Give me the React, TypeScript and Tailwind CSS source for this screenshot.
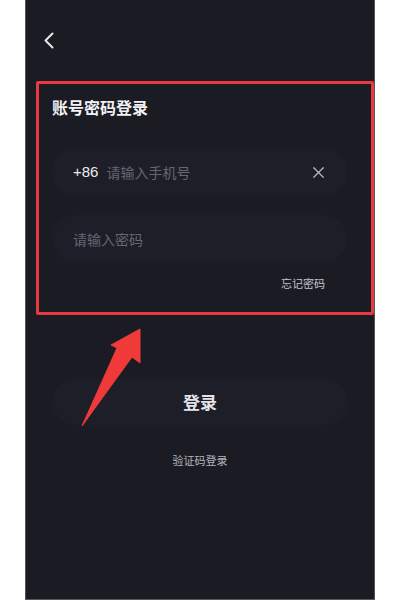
import { X } from 'lucide-react';

export default function App() {
  return (
    <div className="min-h-[600px] w-full bg-white" style={{ fontFamily: '"Noto Sans CJK SC", "Noto Sans", sans-serif' }}>
      <div className="relative mx-auto flex h-[600px] w-[350px] flex-col border-x border-b border-[#55555c] bg-[#1b1b23]">
        {/* back */}
        <div className="pl-[17px] pt-[32px]">
          <svg width="12" height="17" viewBox="0 0 12 17" fill="none">
            <path d="M9.5 1.5 L2.5 8.5 L9.5 15.5" stroke="#e6e6ea" strokeWidth="2" strokeLinecap="round" strokeLinejoin="round" />
          </svg>
        </div>

        {/* form, red annotation frame */}
        <div className="ml-[10px] mt-[32px] w-[338px] rounded-[2px] border-[3px] border-[#e8393e] pb-[21px] pl-[13px] pr-[24px] pt-[11px]">
          <h1 className="text-[16px] font-bold leading-[24px] text-[#f2f2f4]">账号密码登录</h1>

          <div className="mt-[29px] flex h-[48px] items-center rounded-full bg-[#1e1e28] pl-[21px] pr-[19px]">
            <span className="text-[15px] text-[#ececf0]" style={{ fontFamily: '"Liberation Sans", "Noto Sans CJK SC", sans-serif' }}>+86</span>
            <span className="ml-[8px] flex-1 text-[14px] text-[#666672]">请输入手机号</span>
            <X size={19} strokeWidth={1.5} className="text-[#b8b8c0]" />
          </div>

          <div className="mt-[19px] flex h-[48px] items-center rounded-full bg-[#1e1e28] pl-[21px]">
            <span className="text-[14px] text-[#666672]">请输入密码</span>
          </div>

          <div className="mt-[12px] flex justify-end pr-[22px]">
            <span className="text-[11px] leading-[16px] text-[#c4c4cc]">忘记密码</span>
          </div>
        </div>

        {/* login button */}
        <div className="mx-[26px] mt-[64px] flex h-[46px] items-center justify-center rounded-full bg-[#1e1e28]">
          <span className="text-[17px] font-bold text-[#e4e4e8]">登录</span>
        </div>

        <div className="mt-[27px] text-center text-[11px] leading-[16px] text-[#b4b4bc]">验证码登录</div>

        {/* annotation arrow */}
        <svg className="absolute left-[54px] top-[326px]" width="64" height="104" viewBox="0 0 64 104">
          <path d="M60 3 L60 37 L52 31 L2 100 L37 22 L31 19 Z" fill="#f03a3a" stroke="#f03a3a" strokeWidth="1" strokeLinejoin="round" />
        </svg>
      </div>
    </div>
  );
}
